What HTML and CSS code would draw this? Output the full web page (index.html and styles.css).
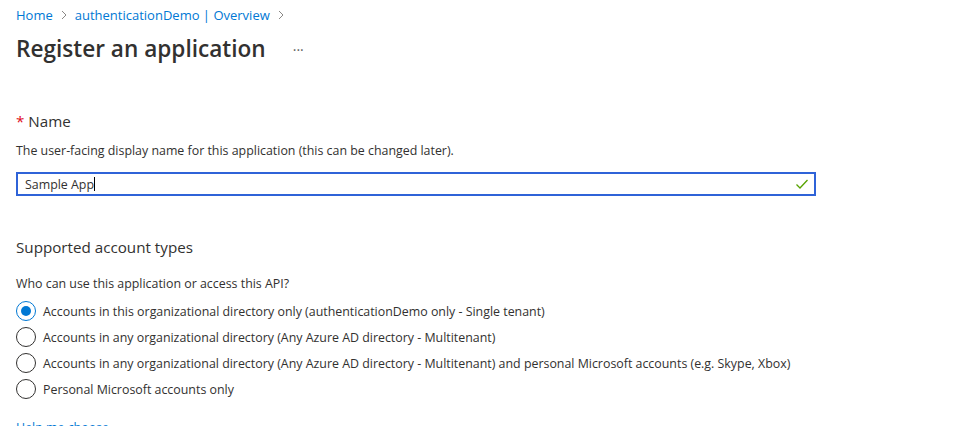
FILE: index.html
```html
<!DOCTYPE html>
<html>
<head>
<meta charset="utf-8">
<link rel="stylesheet" href="styles.css">
</head>
<body>
<div class="page">
  <nav class="crumbs">
    <a class="crumb">Home</a>
    <span class="chev"><svg width="8" height="10" viewBox="0 0 8 10"><path d="M2 1l4 4-4 4" fill="none" stroke="#8a8886" stroke-width="1"/></svg></span>
    <a class="crumb">authenticationDemo | Overview</a>
    <span class="chev"><svg width="8" height="10" viewBox="0 0 8 10"><path d="M2 1l4 4-4 4" fill="none" stroke="#8a8886" stroke-width="1"/></svg></span>
  </nav>
  <header class="titlebar">
    <h1 class="title">Register an application</h1>
    <span class="more">···</span>
  </header>

  <section class="field">
    <h2 class="label"><span class="req">*</span> Name</h2>
    <p class="desc first">The user-facing display name for this application (this can be changed later).</p>
    <div class="input">
      <span class="value">Sample App<span class="caret"></span></span>
      <svg class="check" width="14" height="12" viewBox="0 0 14 12"><path d="M1.5 6.5l3.5 3.5 7.5-8" fill="none" stroke="#57a300" stroke-width="1.3"/></svg>
    </div>
  </section>

  <section class="field accounts">
    <h2 class="label">Supported account types</h2>
    <p class="desc q">Who can use this application or access this API?</p>
    <ul class="radios">
      <li class="radio checked"><span class="dot"></span>Accounts in this organizational directory only (authenticationDemo only - Single tenant)</li>
      <li class="radio"><span class="dot"></span>Accounts in any organizational directory (Any Azure AD directory - Multitenant)</li>
      <li class="radio"><span class="dot"></span>Accounts in any organizational directory (Any Azure AD directory - Multitenant) and personal Microsoft accounts (e.g. Skype, Xbox)</li>
      <li class="radio"><span class="dot"></span>Personal Microsoft accounts only</li>
    </ul>
    <a class="help">Help me choose...</a>
  </section>
</div>
</body>
</html>
```
FILE: styles.css
```css
html, body {
  margin: 0;
  padding: 0;
  background: #fff;
  overflow: hidden;
}
body {
  font-family: "Open Sans", "Noto Sans", "Liberation Sans", sans-serif;
  color: #323130;
  font-size: 13px;
}
.page {
  padding: 5px 16px 0 16px;
  width: 800px;
}
.crumbs {
  display: flex;
  align-items: center;
  height: 20px;
}
.crumb {
  color: #0078d4;
  font-size: 13px;
}
.chev {
  display: inline-flex;
  width: 22px;
  justify-content: center;
  align-items: center;
}
.titlebar {
  display: flex;
  align-items: center;
  margin-top: 9px;
  height: 30px;
}
.title {
  margin: 0;
  font-size: 22.6px;
  font-weight: 600;
  color: #323130;
  line-height: 30px;
}
.more {
  margin-left: 27px;
  font-size: 14px;
  color: #605e5c;
}
.field {
  margin-top: 47px;
}
.label {
  margin: 0;
  font-size: 15.2px;
  font-weight: 400;
  line-height: 20px;
  color: #323130;
}
.req {
  color: #e00b1c;
}
.desc {
  margin: 8px 0 0 0;
  font-size: 12.4px;
  line-height: 18px;
}
.desc.first {
  margin-top: 11px;
}
.input {
  margin-top: 12px;
  box-sizing: border-box;
  height: 24px;
  border: 2px solid #2f63d8;
  display: flex;
  align-items: center;
  justify-content: space-between;
  padding: 0 5px 0 7px;
}
.value {
  font-size: 12.4px;
  display: inline-flex;
  align-items: center;
}
.caret {
  display: inline-block;
  width: 1px;
  height: 14px;
  background: #000;
}
.accounts {
  margin-top: 41px;
}
.q {
  margin-top: 18px;
}
.radios {
  list-style: none;
  margin: 5px 0 0 0;
  padding: 0;
}
.radio {
  display: flex;
  align-items: center;
  height: 26px;
  font-size: 12.4px;
}
.dot {
  box-sizing: border-box;
  width: 20px;
  height: 20px;
  border: 1px solid #323130;
  border-radius: 50%;
  margin-right: 7px;
  flex: none;
  display: flex;
  align-items: center;
  justify-content: center;
}
.checked .dot {
  border-color: #0078d4;
}
.checked .dot::after {
  content: "";
  width: 10px;
  height: 10px;
  border-radius: 50%;
  background: #0078d4;
}
.help {
  display: block;
  margin-top: 17px;
  color: #0078d4;
  font-size: 12.4px;
}
```
